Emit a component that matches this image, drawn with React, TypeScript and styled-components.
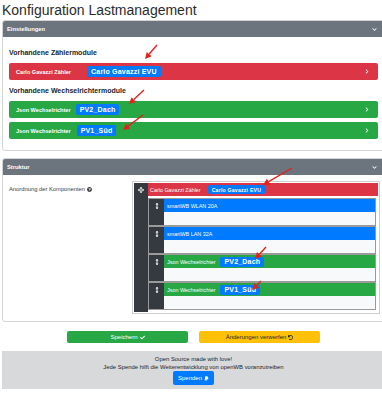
import React from 'react';
import styled, { createGlobalStyle } from 'styled-components';
import {
  FaArrowsAlt,
  FaArrowsAltV,
  FaCheck,
  FaChevronDown,
  FaChevronRight,
  FaPaypal,
  FaQuestionCircle,
  FaUndo,
} from 'react-icons/fa';

const GlobalStyle = createGlobalStyle`
  html, body {
    margin: 0;
    padding: 0;
    overflow: hidden;
    background: #fff;
  }

  body {
    font-family: "Liberation Sans", Arial, sans-serif;
    color: #212529;
  }
`;

const Root = styled.div`
  position: relative;
  width: 385px;
`;

const Page = styled.div`
  width: 383px;
  margin-left: 2px;
`;

const Title = styled.h1`
  margin: 0;
  height: 20px;
  font-size: 14px;
  line-height: 20px;
  font-weight: normal;
  color: #2b2b2b;
  white-space: nowrap;
`;

const Card = styled.section`
  border: 1px solid #d4d4d4;
  border-radius: 3px;
  background: #fff;
  overflow: hidden;

  & + & {
    margin-top: 7px;
  }
`;

const CardHeader = styled.div`
  display: flex;
  align-items: center;
  justify-content: space-between;
  height: 16px;
  padding: 0 7px 0 4px;
  background: #6c757d;
  color: #fff;
  font-size: 5.8px;
  font-weight: bold;
`;

const CardBody = styled.div<{ $pad: string }>`
  padding: ${p => p.$pad};
`;

const Section = styled.div`
  display: flex;
  flex-direction: column;
  gap: 4px;

  & + & {
    margin-top: 5px;
  }
`;

const SectionHeading = styled.h3`
  margin: 0;
  font-size: 7px;
  line-height: 12px;
  font-weight: bold;
  color: #212529;
`;

const ModuleBar = styled.div<{ $color: string }>`
  display: flex;
  align-items: center;
  height: 17px;
  padding: 0 9px 0 7px;
  border-radius: 2px;
  background: ${p => p.$color};
  color: #fff;
`;

const BarLabel = styled.span`
  font-size: 5.6px;
  font-weight: bold;
  white-space: nowrap;
`;

const Badge = styled.span<{ $gap: number; $size: number; $height: number }>`
  display: inline-flex;
  align-items: center;
  margin-left: ${p => p.$gap}px;
  height: ${p => p.$height}px;
  padding: 0 4px;
  border-radius: 2px;
  background: #007bff;
  color: #fff;
  font-size: ${p => p.$size}px;
  font-weight: bold;
  letter-spacing: 0.2px;
  white-space: nowrap;
`;

const BarChevron = styled(FaChevronRight)`
  margin-left: auto;
  width: 4px;
  height: 5px;
`;

const StructureGrid = styled.div`
  display: grid;
  grid-template-columns: 123px 248px;
  align-items: start;
`;

const FieldLabel = styled.div`
  display: flex;
  align-items: center;
  gap: 2px;
  padding-top: 4px;
  font-size: 5.8px;
  line-height: 8px;
  color: #3a3a3a;
  white-space: nowrap;

  svg {
    width: 5px;
    height: 5px;
  }
`;

const Tree = styled.div`
  border: 1px solid #cfcfcf;
  padding: 1px;
`;

const Node = styled.div<{ $child?: boolean }>`
  display: flex;
  border: ${p => (p.$child ? '1px solid #9a9a9a' : 'none')};
  background: #fff;
`;

const Handle = styled.div<{ $width: number }>`
  flex: 0 0 ${p => p.$width}px;
  display: flex;
  justify-content: center;
  background: #343a40;
  color: #fff;

  svg {
    margin-top: 3.5px;
    width: 6px;
    height: 6px;
  }
`;

const NodeMain = styled.div`
  flex: 1;
  display: flex;
  flex-direction: column;
  min-width: 0;
`;

const NodeHeader = styled.div<{ $color: string; $indent: number }>`
  display: flex;
  align-items: center;
  height: 13px;
  padding-left: ${p => p.$indent}px;
  background: ${p => p.$color};
  color: #fff;
  font-size: 5.4px;
  white-space: nowrap;
`;

const NodeBody = styled.div`
  height: 13px;
  background: #f8f9fa;
`;

const NodeChildren = styled.div`
  display: flex;
  flex-direction: column;
  padding: 2px 2px 2px 0;
`;

const ButtonRow = styled.div`
  display: flex;
  justify-content: center;
  gap: 11px;
  margin-top: 9px;
`;

const Button = styled.button<{ $bg: string; $fg: string }>`
  display: flex;
  align-items: center;
  justify-content: center;
  gap: 2px;
  width: 121px;
  height: 12px;
  padding: 0;
  border: none;
  border-radius: 2px;
  background: ${p => p.$bg};
  color: ${p => p.$fg};
  font-family: inherit;
  font-size: 6px;

  svg {
    width: 5px;
    height: 5px;
  }
`;

const Footer = styled.footer`
  margin-top: 8px;
  padding: 5px 0 4px;
  background: #d8d9db;
  text-align: center;
  font-size: 5.9px;
  line-height: 7.5px;
  color: #212529;
`;

const DonateButton = styled.button`
  display: inline-flex;
  align-items: center;
  gap: 2px;
  height: 14px;
  padding: 0 5px;
  border: none;
  border-radius: 2px;
  background: #007bff;
  color: #fff;
  font-family: inherit;
  font-size: 6px;
  vertical-align: top;

  svg {
    width: 5px;
    height: 5px;
  }
`;

const Overlay = styled.svg`
  position: absolute;
  top: 0;
  left: 0;
  pointer-events: none;
`;

const RED = '#dc3545';
const GREEN = '#28a745';
const BLUE = '#007bff';

// annotation arrows drawn over the screenshot: tail x, tail y, head x, head y
const arrows: [number, number, number, number][] = [
  [157, 45, 145, 59],
  [144, 90, 129, 104],
  [143, 115, 123, 130],
  [292, 168, 263, 185],
  [266, 247, 255, 259],
  [261, 281, 252, 290],
];

const Arrows = () => (
  <Overlay width={382} height={400}>
    {arrows.map(([x1, y1, x2, y2], i) => {
      const a = Math.atan2(y2 - y1, x2 - x1);
      const len = 6.5;
      const w = 3.3;
      const bx = x2 - Math.cos(a) * len;
      const by = y2 - Math.sin(a) * len;
      const px = -Math.sin(a) * w;
      const py = Math.cos(a) * w;
      return (
        <g key={i}>
          <line x1={x1} y1={y1} x2={bx} y2={by} stroke="#e5211b" strokeWidth={1.4} />
          <polygon
            points={`${x2},${y2} ${bx + px},${by + py} ${bx - px},${by - py}`}
            fill="#e5211b"
          />
        </g>
      );
    })}
  </Overlay>
);

type Module = { color: string; label: string; badge: string; gap: number };

const counterModules: Module[] = [
  { color: RED, label: 'Carlo Gavazzi Zähler', badge: 'Carlo Gavazzi EVU', gap: 16 },
];

const inverterModules: Module[] = [
  { color: GREEN, label: 'Json Wechselrichter', badge: 'PV2_Dach', gap: 5 },
  { color: GREEN, label: 'Json Wechselrichter', badge: 'PV1_Süd', gap: 6 },
];

const ModuleRow = ({ module }: { module: Module }) => (
  <ModuleBar $color={module.color}>
    <BarLabel>{module.label}</BarLabel>
    <Badge $gap={module.gap} $size={7} $height={11}>
      {module.badge}
    </Badge>
    <BarChevron />
  </ModuleBar>
);

type Child = { color: string; label: string; badge?: string };

const children: Child[] = [
  { color: BLUE, label: 'smartWB WLAN 20A' },
  { color: BLUE, label: 'smartWB LAN 32A' },
  { color: GREEN, label: 'Json Wechselrichter', badge: 'PV2_Dach' },
  { color: GREEN, label: 'Json Wechselrichter', badge: 'PV1_Süd' },
];

const ChildNode = ({ child }: { child: Child }) => (
  <Node $child>
    <Handle $width={15}>
      <FaArrowsAltV />
    </Handle>
    <NodeMain>
      <NodeHeader $color={child.color} $indent={3}>
        {child.label}
        {child.badge && (
          <Badge $gap={5} $size={7} $height={10}>
            {child.badge}
          </Badge>
        )}
      </NodeHeader>
      <NodeBody />
    </NodeMain>
  </Node>
);

export default function App() {
  return (
    <Root>
      <GlobalStyle />
      <Page>
        <Title>Konfiguration Lastmanagement</Title>

        <Card>
          <CardHeader>
            Einstellungen
            <FaChevronDown size={5} />
          </CardHeader>
          <CardBody $pad="10px 6px 11px">
            <Section>
              <SectionHeading>Vorhandene Zählermodule</SectionHeading>
              {counterModules.map((m, i) => (
                <ModuleRow key={i} module={m} />
              ))}
            </Section>
            <Section>
              <SectionHeading>Vorhandene Wechselrichtermodule</SectionHeading>
              {inverterModules.map((m, i) => (
                <ModuleRow key={i} module={m} />
              ))}
            </Section>
          </CardBody>
        </Card>

        <Card>
          <CardHeader>
            Struktur
            <FaChevronDown size={5} />
          </CardHeader>
          <CardBody $pad="6px 4px 7px 6px">
            <StructureGrid>
              <FieldLabel>
                Anordnung der Komponenten <FaQuestionCircle />
              </FieldLabel>
              <Tree>
                <Node>
                  <Handle $width={14}>
                    <FaArrowsAlt />
                  </Handle>
                  <NodeMain>
                    <NodeHeader $color={RED} $indent={2}>
                      Carlo Gavazzi Zähler
                      <Badge $gap={7} $size={5.2} $height={9}>
                        Carlo Gavazzi EVU
                      </Badge>
                    </NodeHeader>
                    <NodeChildren>
                      {children.map((c, i) => (
                        <ChildNode key={i} child={c} />
                      ))}
                    </NodeChildren>
                  </NodeMain>
                </Node>
              </Tree>
            </StructureGrid>
          </CardBody>
        </Card>

        <ButtonRow>
          <Button $bg={GREEN} $fg="#fff">
            Speichern <FaCheck />
          </Button>
          <Button $bg="#ffc107" $fg="#212529">
            Änderungen verwerfen <FaUndo />
          </Button>
        </ButtonRow>

        <Footer>
          <div>Open Source made with love!</div>
          <div>Jede Spende hilft die Weiterentwicklung von openWB voranzutreiben</div>
          <DonateButton>
            Spenden <FaPaypal />
          </DonateButton>
        </Footer>
      </Page>
      <Arrows />
    </Root>
  );
}
